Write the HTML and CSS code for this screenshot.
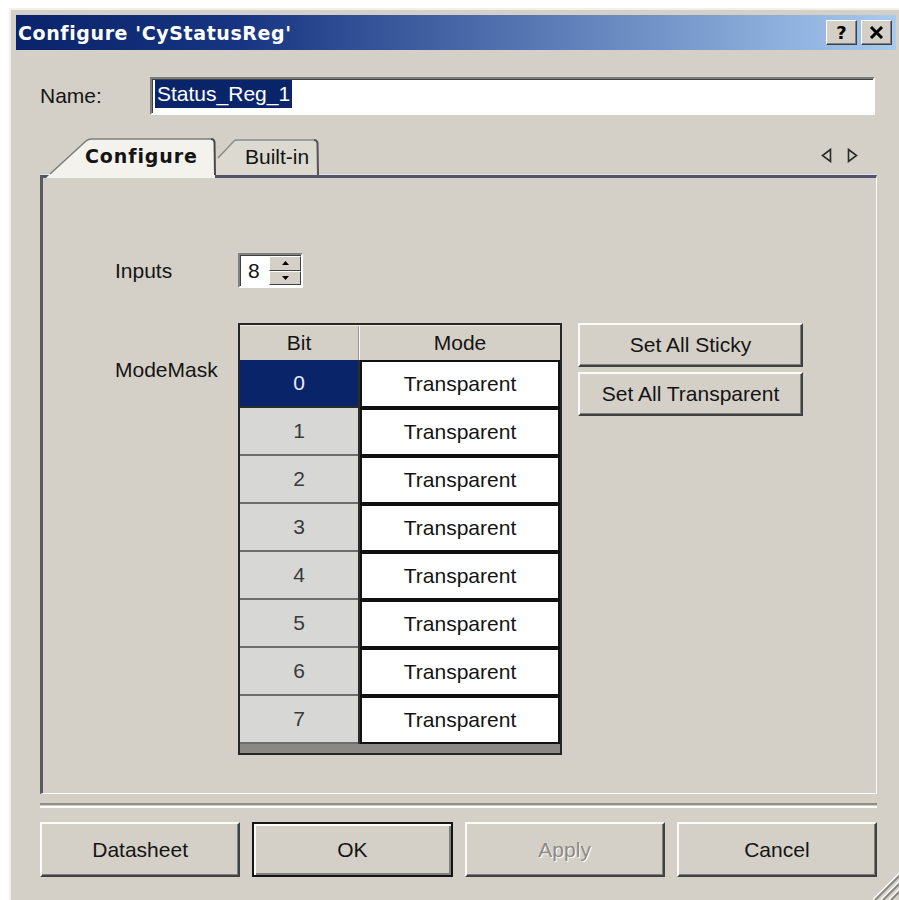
FILE: index.html
```html
<!DOCTYPE html>
<html lang="en">
<head>
<meta charset="utf-8">
<title>Configure 'CyStatusReg'</title>
<link rel="stylesheet" href="styles.css">
</head>
<body>
<div class="window">
  <div class="titlebar">
    <span class="title">Configure 'CyStatusReg'</span>
    <div class="caption-btns">
      <button class="cap cap-help">?</button>
      <button class="cap cap-close" aria-label="Close">
        <svg width="15" height="13" viewBox="0 0 15 13"><path d="M2 1 L13 12 M13 1 L2 12" stroke="#000" stroke-width="3" fill="none"/></svg>
      </button>
    </div>
  </div>

  <div class="dlg">
    <div class="name-row">
      <span class="name-label">Name:</span>
      <div class="field"><span class="sel">Status_Reg_1</span></div>
    </div>

    <div class="tabstrip">
      <div class="tab tab-active">
        <svg class="tab-shape" width="172" height="40" viewBox="0 0 172 40">
          <path d="M1 40 L5 36 L41 3 Q43 1 47 1 L166 1 Q169 1 169.5 4 L170 40 Z" fill="#f3f2ec"/>
          <path d="M5 36 L41 3 Q43 1 47 1 L166 1" stroke="#7c7c7c" stroke-width="1.5" fill="none"/>
          <path d="M166 1 Q169 1 169.5 4 L170 37" stroke="#4a4a4a" stroke-width="2" fill="none"/>
        </svg>
        <span class="tab-label">Configure</span>
      </div>
      <div class="tab tab-back">
        <svg class="tab-shape" width="110" height="36" viewBox="0 0 110 36">
          <path d="M0 36 L0 27 L24 2 Q25 1 27 1 L104 1 Q107 1 107.5 4 L108 36 Z" fill="#dcd9d1"/>
          <path d="M8 19 L24 2 Q25 1 27 1 L104 1" stroke="#8a8a8a" stroke-width="1.5" fill="none"/>
          <path d="M104 1 Q107 1 107.5 4 L108 36" stroke="#555" stroke-width="2" fill="none"/>
        </svg>
        <span class="tab-label">Built-in</span>
      </div>
      <div class="tab-arrows">
        <svg width="11" height="15" viewBox="0 0 11 15"><path d="M9.5 1.5 L1.5 7.5 L9.5 13.5 Z" fill="none" stroke="#2a2a2a" stroke-width="1.6"/></svg>
        <svg width="11" height="15" viewBox="0 0 11 15"><path d="M1.5 1.5 L9.5 7.5 L1.5 13.5 Z" fill="none" stroke="#2a2a2a" stroke-width="1.6"/></svg>
      </div>
    </div>

    <div class="panel">
      <div class="form">
        <span class="lbl lbl-inputs">Inputs</span>
        <div class="spin">
          <span class="spin-val">8</span>
          <div class="spin-btns">
            <span class="spin-btn"><svg width="7" height="4" viewBox="0 0 7 4"><path d="M0 4 L3.5 0 L7 4 Z" fill="#000"/></svg></span>
            <span class="spin-btn"><svg width="7" height="4" viewBox="0 0 7 4"><path d="M0 0 L3.5 4 L7 0 Z" fill="#000"/></svg></span>
          </div>
        </div>
        <span></span>

        <span class="lbl lbl-mask">ModeMask</span>
        <div class="grid-tbl">
          <div class="thead">
            <span class="th th-bit">Bit</span>
            <span class="th th-mode">Mode</span>
          </div>
          <div class="trow"><span class="bitc bitc-sel">0</span><span class="modec">Transparent</span></div>
          <div class="trow"><span class="bitc">1</span><span class="modec">Transparent</span></div>
          <div class="trow"><span class="bitc">2</span><span class="modec">Transparent</span></div>
          <div class="trow"><span class="bitc">3</span><span class="modec">Transparent</span></div>
          <div class="trow"><span class="bitc">4</span><span class="modec">Transparent</span></div>
          <div class="trow"><span class="bitc">5</span><span class="modec">Transparent</span></div>
          <div class="trow"><span class="bitc">6</span><span class="modec">Transparent</span></div>
          <div class="trow"><span class="bitc">7</span><span class="modec">Transparent</span></div>
          <div class="tfoot"></div>
        </div>
        <div class="side">
          <button class="btn side-btn">Set All Sticky</button>
          <button class="btn side-btn">Set All Transparent</button>
        </div>
      </div>
    </div>

    <div class="sep"></div>

    <div class="actions">
      <button class="btn act">Datasheet</button>
      <button class="btn act act-default">OK</button>
      <button class="btn act act-disabled">Apply</button>
      <button class="btn act">Cancel</button>
    </div>
  </div>

  <svg class="grip" width="26" height="30" viewBox="0 0 26 30">
    <g stroke-width="2" fill="none">
      <path d="M27 3 L0 30" stroke="#fff"/>
      <path d="M27 5 L2 30" stroke="#8a8780"/>
      <path d="M27 11 L8 30" stroke="#fff"/>
      <path d="M27 13 L10 30" stroke="#8a8780"/>
      <path d="M27 19 L16 30" stroke="#fff"/>
      <path d="M27 21 L18 30" stroke="#8a8780"/>
    </g>
  </svg>
</div>
</body>
</html>
```
FILE: styles.css
```css
* { box-sizing: border-box; }

html, body { margin: 0; }

body {
  width: 899px;
  height: 900px;
  overflow: hidden;
  background: #fff;
  font-family: "Liberation Sans", Arial, sans-serif;
  font-size: 21px;
  line-height: 24px;
  color: #141414;
}

button {
  font: inherit;
  color: inherit;
  margin: 0;
}

/* dialog frame */
.window {
  position: relative;
  margin: 8px 0 0 9px;
  width: 890px;
  height: 892px;
  background: #d4d0c8;
  border-top: 2px solid #f2f0e9;
  border-left: 2px solid #f2f0e9;
  padding: 5px 3px 0 5px;
}

.titlebar {
  height: 35px;
  display: flex;
  align-items: center;
  padding: 0 4px 0 2px;
  background: linear-gradient(to right, #0a246a 0%, #163481 25%, #a6caf0 100%);
}

.title {
  font-family: "DejaVu Sans", Verdana, sans-serif;
  font-weight: bold;
  font-size: 19px;
  letter-spacing: 0.6px;
  color: #fff;
}

.caption-btns {
  margin-left: auto;
  display: flex;
  gap: 4px;
}

.cap {
  width: 31px;
  height: 25px;
  padding: 0;
  background: #d4d0c8;
  border: 1px solid;
  border-color: #fff #404040 #404040 #fff;
  box-shadow: inset -1px -1px 0 #808080;
  display: flex;
  align-items: center;
  justify-content: center;
}

.cap-help {
  font-family: "DejaVu Sans", Verdana, sans-serif;
  font-weight: bold;
  font-size: 18px;
  color: #000;
}

/* dialog body */
.dlg {
  padding: 27px 19px 0 24px;
}

.name-row {
  display: flex;
  align-items: center;
  height: 38px;
}

.name-label {
  width: 110px;
}

.field {
  flex: 1;
  margin-right: 2px;
  height: 38px;
  background: #fff;
  border: 2px solid;
  border-color: #7c7c7c #fff #fff #7c7c7c;
  box-shadow: inset 1px 1px 0 #404040;
  padding: 0 3px;
  display: flex;
  align-items: flex-start;
}

.sel {
  margin-top: 1px;
  background: #0a246a;
  color: #fff;
  line-height: 28px;
  padding: 0 2px;
}

/* tabs */
.tabstrip {
  position: relative;
  z-index: 1;
  display: flex;
  align-items: flex-end;
  height: 37px;
  margin-top: 23px;
}

.tab {
  position: relative;
  isolation: isolate;
  display: flex;
  align-items: center;
}

.tab-shape {
  position: absolute;
  left: 0;
  top: 0;
  z-index: -1;
}

.tab-active {
  z-index: 2;
  width: 172px;
  height: 40px;
  margin-left: 5px;
  margin-bottom: -3px;
  padding: 0 0 4px 40px;
}

.tab-active .tab-label {
  font-family: "DejaVu Sans", Verdana, sans-serif;
  font-weight: bold;
  font-size: 19px;
  letter-spacing: 0.9px;
}

.tab-back {
  z-index: 1;
  width: 110px;
  height: 36px;
  margin-left: -7px;
  padding: 0 0 0 35px;
}

.tab-arrows {
  margin-left: auto;
  margin-right: 19px;
  align-self: center;
  margin-bottom: 2px;
  display: flex;
  gap: 15px;
}

.tab-arrows svg { display: block; }

/* tab page */
.panel {
  height: 619px;
  border-top: 3px solid #52526c;
  border-left: 3px solid #5a5a5a;
  border-right: 1px solid #fff;
  border-bottom: 1px solid #fff;
  box-shadow: 0 -1px 0 #dfe5ea;
  padding: 75px 0 0 72px;
}

.form {
  display: grid;
  grid-template-columns: 123px 324px auto;
  row-gap: 35px;
  align-items: start;
  justify-items: start;
}

.lbl-inputs {
  align-self: center;
}

.lbl-mask {
  margin-top: 35px;
}

/* spin box */
.spin {
  width: 65px;
  height: 35px;
  display: flex;
  background: #fff;
  border: 2px solid;
  border-color: #808080 #fff #fff #808080;
  box-shadow: inset 1px 1px 0 #404040;
}

.spin-val {
  flex: 1;
  padding: 1px 0 0 8px;
  line-height: 30px;
}

.spin-btns {
  width: 32px;
  display: flex;
  flex-direction: column;
  padding: 1px 0;
}

.spin-btn {
  flex: 1;
  background: #d4d0c8;
  border: 1px solid;
  border-color: #fff #404040 #404040 #fff;
  display: flex;
  align-items: center;
  justify-content: center;
}

.spin-btn svg { display: block; }

/* bit / mode grid */
.grid-tbl {
  width: 324px;
  border: 2px solid #262626;
  background: #2c2c2c;
}

.thead {
  display: flex;
  height: 35px;
  background: #d4d0c8;
  border-top: 1px solid #eeece6;
}

.th {
  display: flex;
  align-items: center;
  justify-content: center;
}

.th-bit {
  width: 119px;
  border-right: 1px solid #9a9892;
}

.th-mode {
  width: 201px;
  border-left: 1px solid #fbfaf7;
}

.trow {
  display: flex;
  height: 48px;
}

.bitc {
  width: 118px;
  background: #d7d7d5;
  border-bottom: 2px solid #6e6e6e;
  color: #3a3a3a;
  display: flex;
  align-items: center;
  justify-content: center;
}

.bitc-sel {
  background: #0a246a;
  color: #e8ecf6;
  border-bottom-color: #2c2c2c;
}

.modec {
  width: 200px;
  margin-left: 2px;
  background: #fff;
  border: 2px solid #111;
  display: flex;
  align-items: center;
  justify-content: center;
}

.tfoot {
  height: 9px;
  background: #8a8884;
}

/* push buttons */
.btn {
  background: #d4d0c8;
  border: 2px solid;
  border-color: #fbfaf6 #404040 #404040 #fbfaf6;
  box-shadow: inset -1px -1px 0 #808080;
  color: #141414;
  padding: 0;
}

.side {
  margin-left: 16px;
  display: flex;
  flex-direction: column;
  gap: 5px;
}

.side-btn {
  width: 225px;
  height: 44px;
}

.sep {
  margin-top: 9px;
  height: 5px;
  border-top: 2px solid #8f8c85;
  border-bottom: 2px solid #fbfaf6;
}

.actions {
  margin-top: 14px;
  display: grid;
  grid-template-columns: repeat(4, 1fr);
  gap: 12px;
}

.act {
  height: 55px;
}

.act-default {
  border: 2px solid #141414;
  box-shadow: inset 2px 2px 0 #fbfaf6, inset -2px -2px 0 #808080;
}

.act-disabled {
  color: #8d8a83;
  text-shadow: 1px 1px 0 #fff;
}

/* size grip */
.grip {
  position: absolute;
  right: 0;
  bottom: 0;
}
```
